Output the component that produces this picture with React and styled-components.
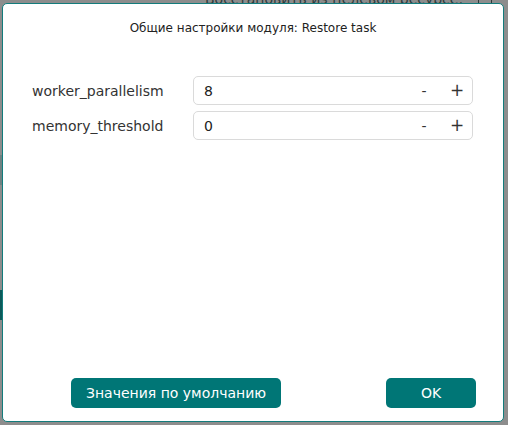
import React from "react";
import styled, { createGlobalStyle } from "styled-components";

const Global = createGlobalStyle`
  html, body { margin: 0; padding: 0; }
  body {
    width: 508px;
    height: 425px;
    overflow: hidden;
    background: #8c8c8c;
    font-family: "DejaVu Sans", Verdana, sans-serif;
  }
`;

const Page = styled.div`
  position: relative;
  width: 508px;
  height: 425px;
  overflow: hidden;
  background: #8d8d8d;
`;

const BackdropText = styled.div`
  position: absolute;
  left: 205px;
  top: -9px;
  font-size: 14px;
  color: #2e3a3a;
  white-space: nowrap;
`;

const BackdropBox = styled.div`
  position: absolute;
  left: 478px;
  top: -8px;
  width: 12px;
  height: 12px;
  border: 1px solid #2e3a3a;
  border-radius: 2px;
`;

const BackdropBar = styled.div`
  position: absolute;
  left: 0;
  top: ${(p) => p.$top}px;
  width: 2px;
  height: ${(p) => p.$h}px;
  background: ${(p) => p.$c};
`;

const Dialog = styled.div`
  position: absolute;
  left: 2px;
  top: 3px;
  width: 500px;
  height: 417px;
  background: #fff;
  border: 1px solid #127c7c;
  border-radius: 5px;
  display: flex;
  flex-direction: column;
`;

const Title = styled.div`
  padding-top: 16px;
  text-align: center;
  font-size: 12px;
  line-height: 16px;
  color: #222;
`;

const Form = styled.div`
  margin-top: 40px;
  padding: 0 30px 0 29px;
  display: flex;
  flex-direction: column;
  gap: 6px;
`;

const Row = styled.div`
  display: flex;
  align-items: center;
  height: 29px;
`;

const Label = styled.div`
  width: 161px;
  font-size: 14px;
  color: #333;
`;

const Spin = styled.div`
  flex: 1;
  height: 29px;
  box-sizing: border-box;
  border: 1px solid #dadada;
  border-radius: 5px;
  display: flex;
  align-items: center;
  padding-left: 10px;
`;

const Value = styled.div`
  flex: 1;
  font-size: 14px;
  color: #222;
`;

const StepBtn = styled.div`
  width: 30px;
  margin-right: ${(p) => (p.$plus ? 0 : 3)}px;
  text-align: center;
  font-size: ${(p) => (p.$plus ? 17 : 14)}px;
  color: #333;
  line-height: 1;
`;

const Footer = styled.div`
  margin-top: auto;
  padding: 0 27px 13px 68px;
  display: flex;
  justify-content: space-between;
`;

const Button = styled.div`
  width: ${(p) => p.$w}px;
  height: 30px;
  box-sizing: border-box;
  background: #007676;
  color: #fff;
  border-radius: 5px;
  display: flex;
  align-items: center;
  justify-content: center;
  font-size: 14px;
`;

const fields = [
  { name: "worker_parallelism", value: "8" },
  { name: "memory_threshold", value: "0" },
];

export default function App() {
  return (
    <Page>
      <Global />
      <BackdropText>Восстановить из целевом ресурсе:</BackdropText>
      <BackdropBox />
      <BackdropBar $top={155} $h={30} $c="#6f8282" />
      <BackdropBar $top={290} $h={30} $c="#0c5a5a" />
      <Dialog>
        <Title>Общие настройки модуля: Restore task</Title>
        <Form>
          {fields.map((f) => (
            <Row key={f.name}>
              <Label>{f.name}</Label>
              <Spin>
                <Value>{f.value}</Value>
                <StepBtn>-</StepBtn>
                <StepBtn $plus>+</StepBtn>
              </Spin>
            </Row>
          ))}
        </Form>
        <Footer>
          <Button $w={210}>Значения по умолчанию</Button>
          <Button $w={90}>OK</Button>
        </Footer>
      </Dialog>
    </Page>
  );
}
